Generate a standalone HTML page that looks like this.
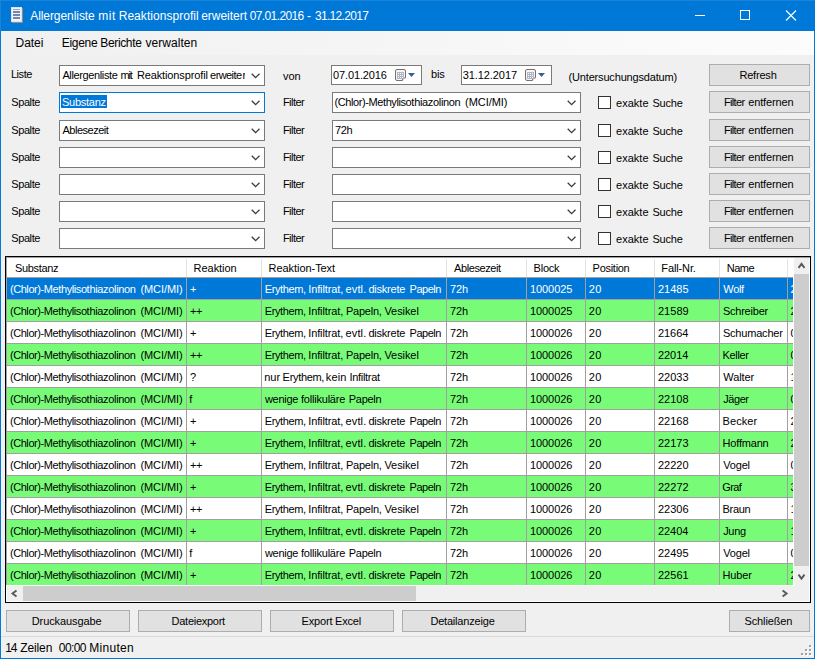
<!DOCTYPE html>
<html><head><meta charset="utf-8"><title>Allergenliste</title>
<style>
html,body{margin:0;padding:0;}
body{width:815px;height:659px;overflow:hidden;background:#f0f0f0;font-family:"Liberation Sans",sans-serif;font-size:11px;color:#000;position:relative;}
div,span,svg{position:absolute;white-space:nowrap;box-sizing:border-box;}
.cb{background:#fff;border:1px solid #7a7a7a;height:21px;}
.dp{background:#fff;border:1px solid #7a7a7a;height:20px;width:91px;top:65px;}
.btn{background:#e1e1e1;border:1px solid #adadad;height:22px;}
.chk{width:13px;height:13px;background:#fff;border:1px solid #333;left:598px;}
</style></head><body>

<div style="left:0px;top:0px;width:815px;height:31px;background:#0078d7;"></div>
<svg style="left:11px;top:7px" width="12" height="16" viewBox="0 0 12 16"><rect x="0" y="0" width="11" height="15" fill="#f1f5fa"/><rect x="0.5" y="0.5" width="10" height="14" fill="none" stroke="#dbe3ee"/><rect x="11" y="1" width="1" height="15" fill="#8f8a86"/><rect x="1" y="15" width="11" height="1" fill="#9a8f86"/><rect x="2" y="2" width="7" height="1" fill="#98a4c6"/><rect x="2" y="4" width="7" height="2" fill="#7684b2"/><rect x="2" y="7" width="7" height="2" fill="#7684b2"/><rect x="2" y="10" width="7" height="2" fill="#7684b2"/></svg>
<span style="left:30.2px;top:9px;font-size:12px;line-height:14px;letter-spacing:-0.065px;color:#fff;">Allergenliste</span>
<span style="left:98.35px;top:9px;font-size:12px;line-height:14px;letter-spacing:0.488px;color:#fff;">mit</span>
<span style="left:118.7px;top:9px;font-size:12px;line-height:14px;letter-spacing:0.048px;color:#fff;">Reaktionsprofil</span>
<span style="left:201.2px;top:9px;font-size:12px;line-height:14px;letter-spacing:-0.022px;color:#fff;">erweitert</span>
<span style="left:249.7px;top:9px;font-size:12px;line-height:14px;letter-spacing:-0.611px;color:#fff;">07.01.2016</span>
<span style="left:307.1px;top:9px;font-size:12px;line-height:14px;letter-spacing:0px;color:#fff;">-</span>
<span style="left:314.9px;top:9px;font-size:12px;line-height:14px;letter-spacing:-0.667px;color:#fff;">31.12.2017</span>
<div style="left:0px;top:0px;width:815px;height:1px;background:#1a84da;"></div>
<div style="left:0px;top:0px;width:1px;height:31px;background:#1a84da;"></div>
<svg style="left:677px;top:0" width="138" height="31" viewBox="0 0 138 31"><path d="M18 15.5h10" stroke="#fff" stroke-width="1" fill="none"/><rect x="63.5" y="10.5" width="9" height="9" stroke="#fff" fill="none"/><path d="M109 10.5l10 10M119 10.5l-10 10" stroke="#fff" stroke-width="1.1" fill="none"/></svg>
<div style="left:0px;top:31px;width:1px;height:628px;background:#0078d7;"></div>
<div style="left:814px;top:31px;width:1px;height:628px;background:#0078d7;"></div>
<div style="left:0px;top:658px;width:815px;height:1px;background:#0078d7;"></div>
<div style="left:1px;top:31px;width:813px;height:24px;background:linear-gradient(to right,#f0f0f0,#fcfcfc);"></div>
<span style="left:15.6px;top:36px;font-size:12px;line-height:14px;letter-spacing:-0.062px;">Datei</span>
<span style="left:61.8px;top:36px;font-size:12px;line-height:14px;letter-spacing:-0.315px;">Eigene</span>
<span style="left:100.3px;top:36px;font-size:12px;line-height:14px;letter-spacing:-0.357px;">Berichte</span>
<span style="left:145.57px;top:36px;font-size:12px;line-height:14px;letter-spacing:0.038px;">verwalten</span>
<span style="left:10.88px;top:68px;font-size:11px;line-height:13px;letter-spacing:-0.406px;">Liste</span>
<div class="cb" style="left:59px;top:65px;width:206px"><svg style="right:4px;top:7px" width="9" height="6" viewBox="0 0 9 6"><path d="M0.7 0.7L4.6 4.6L8.5 0.7" stroke="#3c3c3c" stroke-width="1.25" fill="none"/></svg></div>
<span style="left:62.4px;top:69px;font-size:11px;line-height:13px;letter-spacing:-0.375px;">Allergenliste</span>
<span style="left:120.55px;top:69px;font-size:11px;line-height:13px;letter-spacing:-1.187px;">mit</span>
<span style="left:136.93px;top:69px;font-size:11px;line-height:13px;letter-spacing:-0.123px;">Reaktionsprofil</span>
<span style="left:210.1px;top:69px;font-size:11px;line-height:13px;letter-spacing:-0.583px;">erweite</span>
<div style="left:242.45px;top:69px;width:2.5500000000000114px;height:13px;overflow:hidden"><span style="left:0;top:0;line-height:13px">r</span></div>
<span style="left:282.88px;top:70px;font-size:11px;line-height:13px;letter-spacing:0.062px;">von</span>
<div class="dp" style="left:331px"></div>
<span style="left:333.12px;top:69px;font-size:11px;line-height:13px;letter-spacing:-0.139px;">07.01.2016</span>
<svg style="left:395px;top:69px" width="12" height="13" viewBox="0 0 12 13"><path d="M2 0.5h7a1.5 1.5 0 0 1 1.5 1.5v6.5l-3 3h-5.5a1.5 1.5 0 0 1 -1.5 -1.5v-8a1.5 1.5 0 0 1 1.5 -1.5z" fill="#f3f6fb" stroke="#7c6e6b"/><path d="M7.5 11.5v-2.5h3" fill="#fff" stroke="#7c6e6b" stroke-width="0.9"/><rect x="2" y="3" width="7" height="7" fill="#b3b7c3"/><g fill="#f4f6fa"><rect x="3" y="4" width="1" height="1"/><rect x="5" y="4" width="1" height="1"/><rect x="7" y="4" width="1" height="1"/><rect x="3" y="6" width="1" height="1"/><rect x="5" y="6" width="1" height="1"/><rect x="7" y="6" width="1" height="1"/><rect x="3" y="8" width="1" height="1"/><rect x="5" y="8" width="1" height="1"/><rect x="7" y="8" width="1" height="1"/></g></svg><svg style="left:408px;top:73px" width="7" height="4" viewBox="0 0 7 4"><path d="M0 0h7L3.5 4z" fill="#3f5c90"/></svg>
<span style="left:431.0px;top:68px;font-size:11px;line-height:13px;letter-spacing:-0.188px;">bis</span>
<div class="dp" style="left:461px"></div>
<span style="left:462.75px;top:69px;font-size:11px;line-height:13px;letter-spacing:-0.083px;">31.12.2017</span>
<svg style="left:525px;top:69px" width="12" height="13" viewBox="0 0 12 13"><path d="M2 0.5h7a1.5 1.5 0 0 1 1.5 1.5v6.5l-3 3h-5.5a1.5 1.5 0 0 1 -1.5 -1.5v-8a1.5 1.5 0 0 1 1.5 -1.5z" fill="#f3f6fb" stroke="#7c6e6b"/><path d="M7.5 11.5v-2.5h3" fill="#fff" stroke="#7c6e6b" stroke-width="0.9"/><rect x="2" y="3" width="7" height="7" fill="#b3b7c3"/><g fill="#f4f6fa"><rect x="3" y="4" width="1" height="1"/><rect x="5" y="4" width="1" height="1"/><rect x="7" y="4" width="1" height="1"/><rect x="3" y="6" width="1" height="1"/><rect x="5" y="6" width="1" height="1"/><rect x="7" y="6" width="1" height="1"/><rect x="3" y="8" width="1" height="1"/><rect x="5" y="8" width="1" height="1"/><rect x="7" y="8" width="1" height="1"/></g></svg><svg style="left:538px;top:73px" width="7" height="4" viewBox="0 0 7 4"><path d="M0 0h7L3.5 4z" fill="#3f5c90"/></svg>
<span style="left:568.62px;top:71px;font-size:11px;line-height:13px;letter-spacing:-0.178px;">(Untersuchungsdatum)</span>
<div class="btn" style="left:709px;top:64px;width:101px"></div>
<span style="left:739.38px;top:69px;font-size:11px;line-height:13px;letter-spacing:-0.188px;">Refresh</span>
<span style="left:11.25px;top:96px;font-size:11px;line-height:13px;letter-spacing:-0.4px;">Spalte</span>
<div class="cb" style="left:59px;top:92px;width:206px;border-color:#0078d7"><svg style="right:4px;top:7px" width="9" height="6" viewBox="0 0 9 6"><path d="M0.7 0.7L4.6 4.6L8.5 0.7" stroke="#3c3c3c" stroke-width="1.25" fill="none"/></svg></div>
<div style="left:61px;top:95px;width:46px;height:13px;background:#0078d7;"></div>
<span style="left:62.0px;top:96px;font-size:11px;line-height:13px;letter-spacing:-0.268px;color:#fff;">Substanz</span>
<span style="left:282.88px;top:96px;font-size:11px;line-height:13px;letter-spacing:-0.525px;">Filter</span>
<div class="cb" style="left:332px;top:92px;width:249px"><svg style="right:4px;top:7px" width="9" height="6" viewBox="0 0 9 6"><path d="M0.7 0.7L4.6 4.6L8.5 0.7" stroke="#3c3c3c" stroke-width="1.25" fill="none"/></svg></div>
<span style="left:334.57px;top:96px;font-size:11px;line-height:13px;letter-spacing:-0.413px;">(Chlor)-Methylisot</span>
<span style="left:414.15px;top:96px;font-size:11px;line-height:13px;letter-spacing:-0.333px;">hiazolinon</span>
<span style="left:465.07px;top:96px;font-size:11px;line-height:13px;letter-spacing:-0.057px;">(MCI/MI)</span>
<div class="chk" style="top:96px"></div>
<span style="left:616.1px;top:97px;font-size:11px;line-height:13px;letter-spacing:0.005px;">exakte</span>
<span style="left:652.4px;top:97px;font-size:11px;line-height:13px;letter-spacing:-0.188px;">Suche</span>
<div class="btn" style="left:709px;top:91px;width:101px"></div>
<span style="left:723.92px;top:96px;font-size:11px;line-height:13px;letter-spacing:-0.635px;">Filter</span>
<span style="left:748.2px;top:96px;font-size:11px;line-height:13px;letter-spacing:-0.144px;">entfernen</span>
<span style="left:11.25px;top:124px;font-size:11px;line-height:13px;letter-spacing:-0.4px;">Spalte</span>
<div class="cb" style="left:59px;top:120px;width:206px"><svg style="right:4px;top:7px" width="9" height="6" viewBox="0 0 9 6"><path d="M0.7 0.7L4.6 4.6L8.5 0.7" stroke="#3c3c3c" stroke-width="1.25" fill="none"/></svg></div>
<span style="left:62.5px;top:124px;font-size:11px;line-height:13px;letter-spacing:-0.486px;">Ablesezeit</span>
<span style="left:282.88px;top:124px;font-size:11px;line-height:13px;letter-spacing:-0.525px;">Filter</span>
<div class="cb" style="left:332px;top:120px;width:249px"><svg style="right:4px;top:7px" width="9" height="6" viewBox="0 0 9 6"><path d="M0.7 0.7L4.6 4.6L8.5 0.7" stroke="#3c3c3c" stroke-width="1.25" fill="none"/></svg></div>
<span style="left:334.88px;top:124px;font-size:11px;line-height:13px;letter-spacing:-0.25px;">72h</span>
<div class="chk" style="top:124px"></div>
<span style="left:616.1px;top:125px;font-size:11px;line-height:13px;letter-spacing:0.005px;">exakte</span>
<span style="left:652.4px;top:125px;font-size:11px;line-height:13px;letter-spacing:-0.188px;">Suche</span>
<div class="btn" style="left:709px;top:119px;width:101px"></div>
<span style="left:723.92px;top:124px;font-size:11px;line-height:13px;letter-spacing:-0.635px;">Filter</span>
<span style="left:748.2px;top:124px;font-size:11px;line-height:13px;letter-spacing:-0.144px;">entfernen</span>
<span style="left:11.25px;top:151px;font-size:11px;line-height:13px;letter-spacing:-0.4px;">Spalte</span>
<div class="cb" style="left:59px;top:147px;width:206px"><svg style="right:4px;top:7px" width="9" height="6" viewBox="0 0 9 6"><path d="M0.7 0.7L4.6 4.6L8.5 0.7" stroke="#3c3c3c" stroke-width="1.25" fill="none"/></svg></div>
<span style="left:282.88px;top:151px;font-size:11px;line-height:13px;letter-spacing:-0.525px;">Filter</span>
<div class="cb" style="left:332px;top:147px;width:249px"><svg style="right:4px;top:7px" width="9" height="6" viewBox="0 0 9 6"><path d="M0.7 0.7L4.6 4.6L8.5 0.7" stroke="#3c3c3c" stroke-width="1.25" fill="none"/></svg></div>
<div class="chk" style="top:151px"></div>
<span style="left:616.1px;top:152px;font-size:11px;line-height:13px;letter-spacing:0.005px;">exakte</span>
<span style="left:652.4px;top:152px;font-size:11px;line-height:13px;letter-spacing:-0.188px;">Suche</span>
<div class="btn" style="left:709px;top:146px;width:101px"></div>
<span style="left:723.92px;top:151px;font-size:11px;line-height:13px;letter-spacing:-0.635px;">Filter</span>
<span style="left:748.2px;top:151px;font-size:11px;line-height:13px;letter-spacing:-0.144px;">entfernen</span>
<span style="left:11.25px;top:178px;font-size:11px;line-height:13px;letter-spacing:-0.4px;">Spalte</span>
<div class="cb" style="left:59px;top:174px;width:206px"><svg style="right:4px;top:7px" width="9" height="6" viewBox="0 0 9 6"><path d="M0.7 0.7L4.6 4.6L8.5 0.7" stroke="#3c3c3c" stroke-width="1.25" fill="none"/></svg></div>
<span style="left:282.88px;top:178px;font-size:11px;line-height:13px;letter-spacing:-0.525px;">Filter</span>
<div class="cb" style="left:332px;top:174px;width:249px"><svg style="right:4px;top:7px" width="9" height="6" viewBox="0 0 9 6"><path d="M0.7 0.7L4.6 4.6L8.5 0.7" stroke="#3c3c3c" stroke-width="1.25" fill="none"/></svg></div>
<div class="chk" style="top:178px"></div>
<span style="left:616.1px;top:179px;font-size:11px;line-height:13px;letter-spacing:0.005px;">exakte</span>
<span style="left:652.4px;top:179px;font-size:11px;line-height:13px;letter-spacing:-0.188px;">Suche</span>
<div class="btn" style="left:709px;top:173px;width:101px"></div>
<span style="left:723.92px;top:178px;font-size:11px;line-height:13px;letter-spacing:-0.635px;">Filter</span>
<span style="left:748.2px;top:178px;font-size:11px;line-height:13px;letter-spacing:-0.144px;">entfernen</span>
<span style="left:11.25px;top:205px;font-size:11px;line-height:13px;letter-spacing:-0.4px;">Spalte</span>
<div class="cb" style="left:59px;top:201px;width:206px"><svg style="right:4px;top:7px" width="9" height="6" viewBox="0 0 9 6"><path d="M0.7 0.7L4.6 4.6L8.5 0.7" stroke="#3c3c3c" stroke-width="1.25" fill="none"/></svg></div>
<span style="left:282.88px;top:205px;font-size:11px;line-height:13px;letter-spacing:-0.525px;">Filter</span>
<div class="cb" style="left:332px;top:201px;width:249px"><svg style="right:4px;top:7px" width="9" height="6" viewBox="0 0 9 6"><path d="M0.7 0.7L4.6 4.6L8.5 0.7" stroke="#3c3c3c" stroke-width="1.25" fill="none"/></svg></div>
<div class="chk" style="top:205px"></div>
<span style="left:616.1px;top:206px;font-size:11px;line-height:13px;letter-spacing:0.005px;">exakte</span>
<span style="left:652.4px;top:206px;font-size:11px;line-height:13px;letter-spacing:-0.188px;">Suche</span>
<div class="btn" style="left:709px;top:200px;width:101px"></div>
<span style="left:723.92px;top:205px;font-size:11px;line-height:13px;letter-spacing:-0.635px;">Filter</span>
<span style="left:748.2px;top:205px;font-size:11px;line-height:13px;letter-spacing:-0.144px;">entfernen</span>
<span style="left:11.25px;top:232px;font-size:11px;line-height:13px;letter-spacing:-0.4px;">Spalte</span>
<div class="cb" style="left:59px;top:228px;width:206px"><svg style="right:4px;top:7px" width="9" height="6" viewBox="0 0 9 6"><path d="M0.7 0.7L4.6 4.6L8.5 0.7" stroke="#3c3c3c" stroke-width="1.25" fill="none"/></svg></div>
<span style="left:282.88px;top:232px;font-size:11px;line-height:13px;letter-spacing:-0.525px;">Filter</span>
<div class="cb" style="left:332px;top:228px;width:249px"><svg style="right:4px;top:7px" width="9" height="6" viewBox="0 0 9 6"><path d="M0.7 0.7L4.6 4.6L8.5 0.7" stroke="#3c3c3c" stroke-width="1.25" fill="none"/></svg></div>
<div class="chk" style="top:232px"></div>
<span style="left:616.1px;top:233px;font-size:11px;line-height:13px;letter-spacing:0.005px;">exakte</span>
<span style="left:652.4px;top:233px;font-size:11px;line-height:13px;letter-spacing:-0.188px;">Suche</span>
<div class="btn" style="left:709px;top:227px;width:101px"></div>
<span style="left:723.92px;top:232px;font-size:11px;line-height:13px;letter-spacing:-0.635px;">Filter</span>
<span style="left:748.2px;top:232px;font-size:11px;line-height:13px;letter-spacing:-0.144px;">entfernen</span>
<div style="left:5px;top:256px;width:806px;height:347px;background:#fff;border:1px solid #000"></div>
<div style="left:6px;top:257px;width:804px;height:1px;background:#a0a0a0;"></div>
<div style="left:6px;top:257px;width:1px;height:328px;background:#a0a0a0;"></div>
<div style="left:7px;top:277px;width:786px;height:1px;background:#a0a0a0;"></div>
<span style="left:15.0px;top:262px;font-size:11px;line-height:13px;letter-spacing:-0.339px;">Substanz</span>
<span style="left:193.62px;top:262px;font-size:11px;line-height:13px;letter-spacing:-0.054px;">Reaktion</span>
<span style="left:268.62px;top:262px;font-size:11px;line-height:13px;letter-spacing:-0.062px;">Reaktion-Text</span>
<span style="left:454.0px;top:262px;font-size:11px;line-height:13px;letter-spacing:-0.403px;">Ablesezeit</span>
<span style="left:533.62px;top:262px;font-size:11px;line-height:13px;letter-spacing:-0.25px;">Block</span>
<span style="left:592.62px;top:262px;font-size:11px;line-height:13px;letter-spacing:-0.286px;">Position</span>
<span style="left:661.33px;top:262px;font-size:11px;line-height:13px;letter-spacing:-0.129px;">Fall-Nr.</span>
<span style="left:726.73px;top:262px;font-size:11px;line-height:13px;letter-spacing:-0.467px;">Name</span>
<div style="left:7px;top:278px;width:786px;height:21px;background:#0078d7;"></div>
<div style="left:7px;top:299px;width:786px;height:1px;background:#a0a0a0;"></div>
<span style="left:9.88px;top:283px;font-size:11px;line-height:13px;letter-spacing:-0.413px;color:#fff;">(Chlor)-Methylisot</span>
<span style="left:89.45px;top:283px;font-size:11px;line-height:13px;letter-spacing:-0.333px;color:#fff;">hiazolinon</span>
<span style="left:140.38px;top:283px;font-size:11px;line-height:13px;letter-spacing:-0.057px;color:#fff;">(MCI/MI)</span>
<span style="left:190.0px;top:283px;font-size:11px;line-height:13px;letter-spacing:0px;color:#fff;">+</span>
<span style="left:264.82px;top:283px;font-size:11px;line-height:13px;letter-spacing:-0.404px;color:#fff;">Erythem,</span>
<span style="left:308.2px;top:283px;font-size:11px;line-height:13px;letter-spacing:-0.103px;color:#fff;">Infiltrat,</span>
<span style="left:345.6px;top:283px;font-size:11px;line-height:13px;letter-spacing:0.119px;color:#fff;">evtl.</span>
<span style="left:368.5px;top:283px;font-size:11px;line-height:13px;letter-spacing:-0.243px;color:#fff;">diskrete</span>
<span style="left:409.62px;top:283px;font-size:11px;line-height:13px;letter-spacing:-0.505px;color:#fff;">Papeln</span>
<span style="left:450.12px;top:283px;font-size:11px;line-height:13px;letter-spacing:-0.125px;color:#fff;">72h</span>
<span style="left:529.88px;top:283px;font-size:11px;line-height:13px;letter-spacing:-0.042px;color:#fff;">1000025</span>
<span style="left:588.7px;top:283px;font-size:11px;line-height:13px;letter-spacing:0.35px;color:#fff;">20</span>
<span style="left:657.9px;top:283px;font-size:11px;line-height:13px;letter-spacing:0.019px;color:#fff;">21485</span>
<span style="left:723.27px;top:283px;font-size:11px;line-height:13px;letter-spacing:-0.317px;color:#fff;">Wolf</span>
<span style="left:790.6px;top:283px;font-size:11px;line-height:13px;letter-spacing:0px;color:#fff;">2</span>
<div style="left:7px;top:300px;width:786px;height:21px;background:#78fc78;"></div>
<div style="left:7px;top:321px;width:786px;height:1px;background:#a0a0a0;"></div>
<span style="left:9.88px;top:305px;font-size:11px;line-height:13px;letter-spacing:-0.413px;">(Chlor)-Methylisot</span>
<span style="left:89.45px;top:305px;font-size:11px;line-height:13px;letter-spacing:-0.333px;">hiazolinon</span>
<span style="left:140.38px;top:305px;font-size:11px;line-height:13px;letter-spacing:-0.057px;">(MCI/MI)</span>
<span style="left:190.0px;top:305px;font-size:11px;line-height:13px;letter-spacing:-0.375px;">++</span>
<span style="left:264.82px;top:305px;font-size:11px;line-height:13px;letter-spacing:-0.404px;">Erythem,</span>
<span style="left:308.2px;top:305px;font-size:11px;line-height:13px;letter-spacing:-0.103px;">Infiltrat,</span>
<span style="left:346.02px;top:305px;font-size:11px;line-height:13px;letter-spacing:-0.25px;">Papeln,</span>
<span style="left:384.48px;top:305px;font-size:11px;line-height:13px;letter-spacing:-0.083px;">Vesikel</span>
<span style="left:450.12px;top:305px;font-size:11px;line-height:13px;letter-spacing:-0.125px;">72h</span>
<span style="left:529.88px;top:305px;font-size:11px;line-height:13px;letter-spacing:-0.042px;">1000025</span>
<span style="left:588.7px;top:305px;font-size:11px;line-height:13px;letter-spacing:0.35px;">20</span>
<span style="left:657.9px;top:305px;font-size:11px;line-height:13px;letter-spacing:0.05px;">21589</span>
<span style="left:722.9px;top:305px;font-size:11px;line-height:13px;letter-spacing:-0.222px;">Schreiber</span>
<span style="left:790.6px;top:305px;font-size:11px;line-height:13px;letter-spacing:0px;">2</span>
<div style="left:7px;top:343px;width:786px;height:1px;background:#a0a0a0;"></div>
<span style="left:9.88px;top:327px;font-size:11px;line-height:13px;letter-spacing:-0.413px;">(Chlor)-Methylisot</span>
<span style="left:89.45px;top:327px;font-size:11px;line-height:13px;letter-spacing:-0.333px;">hiazolinon</span>
<span style="left:140.38px;top:327px;font-size:11px;line-height:13px;letter-spacing:-0.057px;">(MCI/MI)</span>
<span style="left:190.0px;top:327px;font-size:11px;line-height:13px;letter-spacing:0px;">+</span>
<span style="left:264.82px;top:327px;font-size:11px;line-height:13px;letter-spacing:-0.404px;">Erythem,</span>
<span style="left:308.2px;top:327px;font-size:11px;line-height:13px;letter-spacing:-0.103px;">Infiltrat,</span>
<span style="left:345.6px;top:327px;font-size:11px;line-height:13px;letter-spacing:0.119px;">evtl.</span>
<span style="left:368.5px;top:327px;font-size:11px;line-height:13px;letter-spacing:-0.243px;">diskrete</span>
<span style="left:409.62px;top:327px;font-size:11px;line-height:13px;letter-spacing:-0.505px;">Papeln</span>
<span style="left:450.12px;top:327px;font-size:11px;line-height:13px;letter-spacing:-0.125px;">72h</span>
<span style="left:529.88px;top:327px;font-size:11px;line-height:13px;letter-spacing:-0.042px;">1000026</span>
<span style="left:588.7px;top:327px;font-size:11px;line-height:13px;letter-spacing:0.35px;">20</span>
<span style="left:657.9px;top:327px;font-size:11px;line-height:13px;letter-spacing:-0.012px;">21664</span>
<span style="left:722.9px;top:327px;font-size:11px;line-height:13px;letter-spacing:-0.192px;">Schumacher</span>
<span style="left:790.6px;top:327px;font-size:11px;line-height:13px;letter-spacing:0px;">0</span>
<div style="left:7px;top:344px;width:786px;height:21px;background:#78fc78;"></div>
<div style="left:7px;top:365px;width:786px;height:1px;background:#a0a0a0;"></div>
<span style="left:9.88px;top:349px;font-size:11px;line-height:13px;letter-spacing:-0.413px;">(Chlor)-Methylisot</span>
<span style="left:89.45px;top:349px;font-size:11px;line-height:13px;letter-spacing:-0.333px;">hiazolinon</span>
<span style="left:140.38px;top:349px;font-size:11px;line-height:13px;letter-spacing:-0.057px;">(MCI/MI)</span>
<span style="left:190.0px;top:349px;font-size:11px;line-height:13px;letter-spacing:-0.375px;">++</span>
<span style="left:264.82px;top:349px;font-size:11px;line-height:13px;letter-spacing:-0.404px;">Erythem,</span>
<span style="left:308.2px;top:349px;font-size:11px;line-height:13px;letter-spacing:-0.103px;">Infiltrat,</span>
<span style="left:346.02px;top:349px;font-size:11px;line-height:13px;letter-spacing:-0.25px;">Papeln,</span>
<span style="left:384.48px;top:349px;font-size:11px;line-height:13px;letter-spacing:-0.083px;">Vesikel</span>
<span style="left:450.12px;top:349px;font-size:11px;line-height:13px;letter-spacing:-0.125px;">72h</span>
<span style="left:529.88px;top:349px;font-size:11px;line-height:13px;letter-spacing:-0.042px;">1000026</span>
<span style="left:588.7px;top:349px;font-size:11px;line-height:13px;letter-spacing:0.35px;">20</span>
<span style="left:657.9px;top:349px;font-size:11px;line-height:13px;letter-spacing:-0.012px;">22014</span>
<span style="left:722.52px;top:349px;font-size:11px;line-height:13px;letter-spacing:-0.325px;">Keller</span>
<span style="left:790.6px;top:349px;font-size:11px;line-height:13px;letter-spacing:0px;">0</span>
<div style="left:7px;top:387px;width:786px;height:1px;background:#a0a0a0;"></div>
<span style="left:9.88px;top:371px;font-size:11px;line-height:13px;letter-spacing:-0.413px;">(Chlor)-Methylisot</span>
<span style="left:89.45px;top:371px;font-size:11px;line-height:13px;letter-spacing:-0.333px;">hiazolinon</span>
<span style="left:140.38px;top:371px;font-size:11px;line-height:13px;letter-spacing:-0.057px;">(MCI/MI)</span>
<span style="left:190.0px;top:371px;font-size:11px;line-height:13px;letter-spacing:0px;">?</span>
<span style="left:264.15px;top:371px;font-size:11px;line-height:13px;letter-spacing:0.0px;">nur</span>
<span style="left:282.62px;top:371px;font-size:11px;line-height:13px;letter-spacing:-0.318px;">Erythem,</span>
<span style="left:325.85px;top:371px;font-size:11px;line-height:13px;letter-spacing:0.117px;">kein</span>
<span style="left:349.5px;top:371px;font-size:11px;line-height:13px;letter-spacing:-0.312px;">Infiltrat</span>
<span style="left:450.12px;top:371px;font-size:11px;line-height:13px;letter-spacing:-0.125px;">72h</span>
<span style="left:529.88px;top:371px;font-size:11px;line-height:13px;letter-spacing:-0.042px;">1000026</span>
<span style="left:588.7px;top:371px;font-size:11px;line-height:13px;letter-spacing:0.35px;">20</span>
<span style="left:657.9px;top:371px;font-size:11px;line-height:13px;letter-spacing:0.019px;">22033</span>
<span style="left:723.27px;top:371px;font-size:11px;line-height:13px;letter-spacing:-0.105px;">Walter</span>
<span style="left:790.6px;top:371px;font-size:11px;line-height:13px;letter-spacing:0px;">1</span>
<div style="left:7px;top:388px;width:786px;height:21px;background:#78fc78;"></div>
<div style="left:7px;top:409px;width:786px;height:1px;background:#a0a0a0;"></div>
<span style="left:9.88px;top:393px;font-size:11px;line-height:13px;letter-spacing:-0.413px;">(Chlor)-Methylisot</span>
<span style="left:89.45px;top:393px;font-size:11px;line-height:13px;letter-spacing:-0.333px;">hiazolinon</span>
<span style="left:140.38px;top:393px;font-size:11px;line-height:13px;letter-spacing:-0.057px;">(MCI/MI)</span>
<span style="left:189.125px;top:393px;font-size:11px;line-height:13px;letter-spacing:0px;">f</span>
<span style="left:264.9px;top:393px;font-size:11px;line-height:13px;letter-spacing:-0.275px;">wenige</span>
<span style="left:300.98px;top:393px;font-size:11px;line-height:13px;letter-spacing:-0.208px;">follikuläre</span>
<span style="left:348.82px;top:393px;font-size:11px;line-height:13px;letter-spacing:-0.305px;">Papeln</span>
<span style="left:450.12px;top:393px;font-size:11px;line-height:13px;letter-spacing:-0.125px;">72h</span>
<span style="left:529.88px;top:393px;font-size:11px;line-height:13px;letter-spacing:-0.042px;">1000026</span>
<span style="left:588.7px;top:393px;font-size:11px;line-height:13px;letter-spacing:0.35px;">20</span>
<span style="left:657.9px;top:393px;font-size:11px;line-height:13px;letter-spacing:0.019px;">22108</span>
<span style="left:723.15px;top:393px;font-size:11px;line-height:13px;letter-spacing:-0.406px;">Jäger</span>
<span style="left:790.6px;top:393px;font-size:11px;line-height:13px;letter-spacing:0px;">0</span>
<div style="left:7px;top:431px;width:786px;height:1px;background:#a0a0a0;"></div>
<span style="left:9.88px;top:415px;font-size:11px;line-height:13px;letter-spacing:-0.413px;">(Chlor)-Methylisot</span>
<span style="left:89.45px;top:415px;font-size:11px;line-height:13px;letter-spacing:-0.333px;">hiazolinon</span>
<span style="left:140.38px;top:415px;font-size:11px;line-height:13px;letter-spacing:-0.057px;">(MCI/MI)</span>
<span style="left:190.0px;top:415px;font-size:11px;line-height:13px;letter-spacing:0px;">+</span>
<span style="left:264.82px;top:415px;font-size:11px;line-height:13px;letter-spacing:-0.404px;">Erythem,</span>
<span style="left:308.2px;top:415px;font-size:11px;line-height:13px;letter-spacing:-0.103px;">Infiltrat,</span>
<span style="left:345.6px;top:415px;font-size:11px;line-height:13px;letter-spacing:0.119px;">evtl.</span>
<span style="left:368.5px;top:415px;font-size:11px;line-height:13px;letter-spacing:-0.243px;">diskrete</span>
<span style="left:409.62px;top:415px;font-size:11px;line-height:13px;letter-spacing:-0.505px;">Papeln</span>
<span style="left:450.12px;top:415px;font-size:11px;line-height:13px;letter-spacing:-0.125px;">72h</span>
<span style="left:529.88px;top:415px;font-size:11px;line-height:13px;letter-spacing:-0.042px;">1000026</span>
<span style="left:588.7px;top:415px;font-size:11px;line-height:13px;letter-spacing:0.35px;">20</span>
<span style="left:657.9px;top:415px;font-size:11px;line-height:13px;letter-spacing:0.019px;">22168</span>
<span style="left:722.52px;top:415px;font-size:11px;line-height:13px;letter-spacing:0.095px;">Becker</span>
<span style="left:790.6px;top:415px;font-size:11px;line-height:13px;letter-spacing:0px;">2</span>
<div style="left:7px;top:432px;width:786px;height:21px;background:#78fc78;"></div>
<div style="left:7px;top:453px;width:786px;height:1px;background:#a0a0a0;"></div>
<span style="left:9.88px;top:437px;font-size:11px;line-height:13px;letter-spacing:-0.413px;">(Chlor)-Methylisot</span>
<span style="left:89.45px;top:437px;font-size:11px;line-height:13px;letter-spacing:-0.333px;">hiazolinon</span>
<span style="left:140.38px;top:437px;font-size:11px;line-height:13px;letter-spacing:-0.057px;">(MCI/MI)</span>
<span style="left:190.0px;top:437px;font-size:11px;line-height:13px;letter-spacing:0px;">+</span>
<span style="left:264.82px;top:437px;font-size:11px;line-height:13px;letter-spacing:-0.404px;">Erythem,</span>
<span style="left:308.2px;top:437px;font-size:11px;line-height:13px;letter-spacing:-0.103px;">Infiltrat,</span>
<span style="left:345.6px;top:437px;font-size:11px;line-height:13px;letter-spacing:0.119px;">evtl.</span>
<span style="left:368.5px;top:437px;font-size:11px;line-height:13px;letter-spacing:-0.243px;">diskrete</span>
<span style="left:409.62px;top:437px;font-size:11px;line-height:13px;letter-spacing:-0.505px;">Papeln</span>
<span style="left:450.12px;top:437px;font-size:11px;line-height:13px;letter-spacing:-0.125px;">72h</span>
<span style="left:529.88px;top:437px;font-size:11px;line-height:13px;letter-spacing:-0.042px;">1000026</span>
<span style="left:588.7px;top:437px;font-size:11px;line-height:13px;letter-spacing:0.35px;">20</span>
<span style="left:657.9px;top:437px;font-size:11px;line-height:13px;letter-spacing:0.019px;">22173</span>
<span style="left:722.52px;top:437px;font-size:11px;line-height:13px;letter-spacing:-0.182px;">Hoffmann</span>
<span style="left:790.6px;top:437px;font-size:11px;line-height:13px;letter-spacing:0px;">2</span>
<div style="left:7px;top:475px;width:786px;height:1px;background:#a0a0a0;"></div>
<span style="left:9.88px;top:459px;font-size:11px;line-height:13px;letter-spacing:-0.413px;">(Chlor)-Methylisot</span>
<span style="left:89.45px;top:459px;font-size:11px;line-height:13px;letter-spacing:-0.333px;">hiazolinon</span>
<span style="left:140.38px;top:459px;font-size:11px;line-height:13px;letter-spacing:-0.057px;">(MCI/MI)</span>
<span style="left:190.0px;top:459px;font-size:11px;line-height:13px;letter-spacing:-0.375px;">++</span>
<span style="left:264.82px;top:459px;font-size:11px;line-height:13px;letter-spacing:-0.404px;">Erythem,</span>
<span style="left:308.2px;top:459px;font-size:11px;line-height:13px;letter-spacing:-0.103px;">Infiltrat,</span>
<span style="left:346.02px;top:459px;font-size:11px;line-height:13px;letter-spacing:-0.25px;">Papeln,</span>
<span style="left:384.48px;top:459px;font-size:11px;line-height:13px;letter-spacing:-0.083px;">Vesikel</span>
<span style="left:450.12px;top:459px;font-size:11px;line-height:13px;letter-spacing:-0.125px;">72h</span>
<span style="left:529.88px;top:459px;font-size:11px;line-height:13px;letter-spacing:-0.042px;">1000026</span>
<span style="left:588.7px;top:459px;font-size:11px;line-height:13px;letter-spacing:0.35px;">20</span>
<span style="left:657.9px;top:459px;font-size:11px;line-height:13px;letter-spacing:0.019px;">22220</span>
<span style="left:723.27px;top:459px;font-size:11px;line-height:13px;letter-spacing:-0.181px;">Vogel</span>
<span style="left:790.6px;top:459px;font-size:11px;line-height:13px;letter-spacing:0px;">0</span>
<div style="left:7px;top:476px;width:786px;height:21px;background:#78fc78;"></div>
<div style="left:7px;top:497px;width:786px;height:1px;background:#a0a0a0;"></div>
<span style="left:9.88px;top:481px;font-size:11px;line-height:13px;letter-spacing:-0.413px;">(Chlor)-Methylisot</span>
<span style="left:89.45px;top:481px;font-size:11px;line-height:13px;letter-spacing:-0.333px;">hiazolinon</span>
<span style="left:140.38px;top:481px;font-size:11px;line-height:13px;letter-spacing:-0.057px;">(MCI/MI)</span>
<span style="left:190.0px;top:481px;font-size:11px;line-height:13px;letter-spacing:0px;">+</span>
<span style="left:264.82px;top:481px;font-size:11px;line-height:13px;letter-spacing:-0.404px;">Erythem,</span>
<span style="left:308.2px;top:481px;font-size:11px;line-height:13px;letter-spacing:-0.103px;">Infiltrat,</span>
<span style="left:345.6px;top:481px;font-size:11px;line-height:13px;letter-spacing:0.119px;">evtl.</span>
<span style="left:368.5px;top:481px;font-size:11px;line-height:13px;letter-spacing:-0.243px;">diskrete</span>
<span style="left:409.62px;top:481px;font-size:11px;line-height:13px;letter-spacing:-0.505px;">Papeln</span>
<span style="left:450.12px;top:481px;font-size:11px;line-height:13px;letter-spacing:-0.125px;">72h</span>
<span style="left:529.88px;top:481px;font-size:11px;line-height:13px;letter-spacing:-0.042px;">1000026</span>
<span style="left:588.7px;top:481px;font-size:11px;line-height:13px;letter-spacing:0.35px;">20</span>
<span style="left:657.9px;top:481px;font-size:11px;line-height:13px;letter-spacing:0.05px;">22272</span>
<span style="left:722.2px;top:481px;font-size:11px;line-height:13px;letter-spacing:-0.558px;">Graf</span>
<span style="left:790.6px;top:481px;font-size:11px;line-height:13px;letter-spacing:0px;">3</span>
<div style="left:7px;top:519px;width:786px;height:1px;background:#a0a0a0;"></div>
<span style="left:9.88px;top:503px;font-size:11px;line-height:13px;letter-spacing:-0.413px;">(Chlor)-Methylisot</span>
<span style="left:89.45px;top:503px;font-size:11px;line-height:13px;letter-spacing:-0.333px;">hiazolinon</span>
<span style="left:140.38px;top:503px;font-size:11px;line-height:13px;letter-spacing:-0.057px;">(MCI/MI)</span>
<span style="left:190.0px;top:503px;font-size:11px;line-height:13px;letter-spacing:-0.375px;">++</span>
<span style="left:264.82px;top:503px;font-size:11px;line-height:13px;letter-spacing:-0.404px;">Erythem,</span>
<span style="left:308.2px;top:503px;font-size:11px;line-height:13px;letter-spacing:-0.103px;">Infiltrat,</span>
<span style="left:346.02px;top:503px;font-size:11px;line-height:13px;letter-spacing:-0.25px;">Papeln,</span>
<span style="left:384.48px;top:503px;font-size:11px;line-height:13px;letter-spacing:-0.083px;">Vesikel</span>
<span style="left:450.12px;top:503px;font-size:11px;line-height:13px;letter-spacing:-0.125px;">72h</span>
<span style="left:529.88px;top:503px;font-size:11px;line-height:13px;letter-spacing:-0.042px;">1000026</span>
<span style="left:588.7px;top:503px;font-size:11px;line-height:13px;letter-spacing:0.35px;">20</span>
<span style="left:657.9px;top:503px;font-size:11px;line-height:13px;letter-spacing:0.019px;">22306</span>
<span style="left:722.52px;top:503px;font-size:11px;line-height:13px;letter-spacing:-0.287px;">Braun</span>
<span style="left:790.6px;top:503px;font-size:11px;line-height:13px;letter-spacing:0px;">1</span>
<div style="left:7px;top:520px;width:786px;height:21px;background:#78fc78;"></div>
<div style="left:7px;top:541px;width:786px;height:1px;background:#a0a0a0;"></div>
<span style="left:9.88px;top:525px;font-size:11px;line-height:13px;letter-spacing:-0.413px;">(Chlor)-Methylisot</span>
<span style="left:89.45px;top:525px;font-size:11px;line-height:13px;letter-spacing:-0.333px;">hiazolinon</span>
<span style="left:140.38px;top:525px;font-size:11px;line-height:13px;letter-spacing:-0.057px;">(MCI/MI)</span>
<span style="left:190.0px;top:525px;font-size:11px;line-height:13px;letter-spacing:0px;">+</span>
<span style="left:264.82px;top:525px;font-size:11px;line-height:13px;letter-spacing:-0.404px;">Erythem,</span>
<span style="left:308.2px;top:525px;font-size:11px;line-height:13px;letter-spacing:-0.103px;">Infiltrat,</span>
<span style="left:345.6px;top:525px;font-size:11px;line-height:13px;letter-spacing:0.119px;">evtl.</span>
<span style="left:368.5px;top:525px;font-size:11px;line-height:13px;letter-spacing:-0.243px;">diskrete</span>
<span style="left:409.62px;top:525px;font-size:11px;line-height:13px;letter-spacing:-0.505px;">Papeln</span>
<span style="left:450.12px;top:525px;font-size:11px;line-height:13px;letter-spacing:-0.125px;">72h</span>
<span style="left:529.88px;top:525px;font-size:11px;line-height:13px;letter-spacing:-0.042px;">1000026</span>
<span style="left:588.7px;top:525px;font-size:11px;line-height:13px;letter-spacing:0.35px;">20</span>
<span style="left:657.9px;top:525px;font-size:11px;line-height:13px;letter-spacing:-0.012px;">22404</span>
<span style="left:723.15px;top:525px;font-size:11px;line-height:13px;letter-spacing:-0.292px;">Jung</span>
<span style="left:790.6px;top:525px;font-size:11px;line-height:13px;letter-spacing:0px;">1</span>
<div style="left:7px;top:563px;width:786px;height:1px;background:#a0a0a0;"></div>
<span style="left:9.88px;top:547px;font-size:11px;line-height:13px;letter-spacing:-0.413px;">(Chlor)-Methylisot</span>
<span style="left:89.45px;top:547px;font-size:11px;line-height:13px;letter-spacing:-0.333px;">hiazolinon</span>
<span style="left:140.38px;top:547px;font-size:11px;line-height:13px;letter-spacing:-0.057px;">(MCI/MI)</span>
<span style="left:189.125px;top:547px;font-size:11px;line-height:13px;letter-spacing:0px;">f</span>
<span style="left:264.9px;top:547px;font-size:11px;line-height:13px;letter-spacing:-0.275px;">wenige</span>
<span style="left:300.98px;top:547px;font-size:11px;line-height:13px;letter-spacing:-0.208px;">follikuläre</span>
<span style="left:348.82px;top:547px;font-size:11px;line-height:13px;letter-spacing:-0.305px;">Papeln</span>
<span style="left:450.12px;top:547px;font-size:11px;line-height:13px;letter-spacing:-0.125px;">72h</span>
<span style="left:529.88px;top:547px;font-size:11px;line-height:13px;letter-spacing:-0.042px;">1000026</span>
<span style="left:588.7px;top:547px;font-size:11px;line-height:13px;letter-spacing:0.35px;">20</span>
<span style="left:657.9px;top:547px;font-size:11px;line-height:13px;letter-spacing:0.019px;">22495</span>
<span style="left:723.27px;top:547px;font-size:11px;line-height:13px;letter-spacing:-0.181px;">Vogel</span>
<span style="left:790.6px;top:547px;font-size:11px;line-height:13px;letter-spacing:0px;">0</span>
<div style="left:7px;top:564px;width:786px;height:21px;background:#78fc78;"></div>
<span style="left:9.88px;top:569px;font-size:11px;line-height:13px;letter-spacing:-0.413px;">(Chlor)-Methylisot</span>
<span style="left:89.45px;top:569px;font-size:11px;line-height:13px;letter-spacing:-0.333px;">hiazolinon</span>
<span style="left:140.38px;top:569px;font-size:11px;line-height:13px;letter-spacing:-0.057px;">(MCI/MI)</span>
<span style="left:190.0px;top:569px;font-size:11px;line-height:13px;letter-spacing:0px;">+</span>
<span style="left:264.82px;top:569px;font-size:11px;line-height:13px;letter-spacing:-0.404px;">Erythem,</span>
<span style="left:308.2px;top:569px;font-size:11px;line-height:13px;letter-spacing:-0.103px;">Infiltrat,</span>
<span style="left:345.6px;top:569px;font-size:11px;line-height:13px;letter-spacing:0.119px;">evtl.</span>
<span style="left:368.5px;top:569px;font-size:11px;line-height:13px;letter-spacing:-0.243px;">diskrete</span>
<span style="left:409.62px;top:569px;font-size:11px;line-height:13px;letter-spacing:-0.505px;">Papeln</span>
<span style="left:450.12px;top:569px;font-size:11px;line-height:13px;letter-spacing:-0.125px;">72h</span>
<span style="left:529.88px;top:569px;font-size:11px;line-height:13px;letter-spacing:-0.042px;">1000026</span>
<span style="left:588.7px;top:569px;font-size:11px;line-height:13px;letter-spacing:0.35px;">20</span>
<span style="left:657.9px;top:569px;font-size:11px;line-height:13px;letter-spacing:0.05px;">22561</span>
<span style="left:722.52px;top:569px;font-size:11px;line-height:13px;letter-spacing:-0.144px;">Huber</span>
<span style="left:790.6px;top:569px;font-size:11px;line-height:13px;letter-spacing:0px;">2</span>
<div style="left:186px;top:259px;width:1px;height:18px;background:#e3e3e3;"></div>
<div style="left:186px;top:277px;width:1px;height:308px;background:#a0a0a0;"></div>
<div style="left:261px;top:259px;width:1px;height:18px;background:#e3e3e3;"></div>
<div style="left:261px;top:277px;width:1px;height:308px;background:#a0a0a0;"></div>
<div style="left:446px;top:259px;width:1px;height:18px;background:#e3e3e3;"></div>
<div style="left:446px;top:277px;width:1px;height:308px;background:#a0a0a0;"></div>
<div style="left:526px;top:259px;width:1px;height:18px;background:#e3e3e3;"></div>
<div style="left:526px;top:277px;width:1px;height:308px;background:#a0a0a0;"></div>
<div style="left:585px;top:259px;width:1px;height:18px;background:#e3e3e3;"></div>
<div style="left:585px;top:277px;width:1px;height:308px;background:#a0a0a0;"></div>
<div style="left:654px;top:259px;width:1px;height:18px;background:#e3e3e3;"></div>
<div style="left:654px;top:277px;width:1px;height:308px;background:#a0a0a0;"></div>
<div style="left:719px;top:259px;width:1px;height:18px;background:#e3e3e3;"></div>
<div style="left:719px;top:277px;width:1px;height:308px;background:#a0a0a0;"></div>
<div style="left:787px;top:259px;width:1px;height:18px;background:#e3e3e3;"></div>
<div style="left:787px;top:277px;width:1px;height:308px;background:#a0a0a0;"></div>
<div style="left:793px;top:258px;width:1px;height:328px;background:#fff;"></div>
<div style="left:794px;top:258px;width:15px;height:343px;background:#f0f0f0;"></div>
<div style="left:809px;top:258px;width:1px;height:344px;background:#fff;"></div>
<div style="left:794px;top:274px;width:15px;height:292px;background:#cdcdcd;"></div>
<div style="left:6px;top:585px;width:788px;height:1px;background:#fff;"></div>
<div style="left:7px;top:586px;width:787px;height:15px;background:#f0f0f0;"></div>
<div style="left:6px;top:601px;width:804px;height:1px;background:#fff;"></div>
<div style="left:6px;top:586px;width:1px;height:15px;background:#fff;"></div>
<div style="left:23px;top:586px;width:393px;height:15px;background:#cdcdcd;"></div>
<svg style="left:793px;top:257px" width="16" height="16" viewBox="0 0 16 16"><path d="M5.5 10.9 L8.5 6.9 L11.5 10.9" stroke="#585858" stroke-width="1.9" fill="none"/></svg>
<svg style="left:793px;top:568px" width="16" height="16" viewBox="0 0 16 16"><path d="M5.5 6.6 L8.5 10.6 L11.5 6.6" stroke="#585858" stroke-width="1.9" fill="none"/></svg>
<svg style="left:6px;top:585px" width="16" height="16" viewBox="0 0 16 16"><path d="M10.5 5.5 L6.5 8.5 L10.5 11.5" stroke="#585858" stroke-width="1.9" fill="none"/></svg>
<svg style="left:776px;top:585px" width="16" height="16" viewBox="0 0 16 16"><path d="M6.6 5.5 L10.6 8.5 L6.6 11.5" stroke="#585858" stroke-width="1.9" fill="none"/></svg>
<div class="btn" style="left:6px;top:610px;width:124px"></div>
<span style="left:31.73px;top:615px;font-size:11px;line-height:13px;letter-spacing:-0.093px;">Druckausgabe</span>
<div class="btn" style="left:138px;top:610px;width:124px"></div>
<span style="left:171.62px;top:615px;font-size:11px;line-height:13px;letter-spacing:-0.275px;">Dateiexport</span>
<div class="btn" style="left:270px;top:610px;width:124px"></div>
<span style="left:301.62px;top:615px;font-size:11px;line-height:13px;letter-spacing:-0.193px;">Export Excel</span>
<div class="btn" style="left:402px;top:610px;width:124px"></div>
<span style="left:430.38px;top:615px;font-size:11px;line-height:13px;letter-spacing:-0.188px;">Detailanzeige</span>
<div class="btn" style="left:729px;top:610px;width:81px"></div>
<span style="left:744.5px;top:615px;font-size:11px;line-height:13px;letter-spacing:-0.119px;">Schließen</span>
<div style="left:1px;top:636px;width:813px;height:1px;background:#dadada;"></div>
<span style="left:5.22px;top:641px;font-size:12px;line-height:14px;letter-spacing:-1.125px;">14</span>
<span style="left:20.23px;top:641px;font-size:12px;line-height:14px;letter-spacing:-0.12px;">Zeilen</span>
<span style="left:58.8px;top:641px;font-size:12px;line-height:14px;letter-spacing:-0.575px;">00:00</span>
<span style="left:89.2px;top:641px;font-size:12px;line-height:14px;letter-spacing:0.304px;">Minuten</span>
<div style="left:810px;top:646px;width:2px;height:2px;background:#fff;"></div>
<div style="left:809px;top:645px;width:2px;height:2px;background:#a0a0a0;"></div>
<div style="left:806px;top:650px;width:2px;height:2px;background:#fff;"></div>
<div style="left:805px;top:649px;width:2px;height:2px;background:#a0a0a0;"></div>
<div style="left:810px;top:650px;width:2px;height:2px;background:#fff;"></div>
<div style="left:809px;top:649px;width:2px;height:2px;background:#a0a0a0;"></div>
<div style="left:802px;top:654px;width:2px;height:2px;background:#fff;"></div>
<div style="left:801px;top:653px;width:2px;height:2px;background:#a0a0a0;"></div>
<div style="left:806px;top:654px;width:2px;height:2px;background:#fff;"></div>
<div style="left:805px;top:653px;width:2px;height:2px;background:#a0a0a0;"></div>
<div style="left:810px;top:654px;width:2px;height:2px;background:#fff;"></div>
<div style="left:809px;top:653px;width:2px;height:2px;background:#a0a0a0;"></div>
</body></html>
